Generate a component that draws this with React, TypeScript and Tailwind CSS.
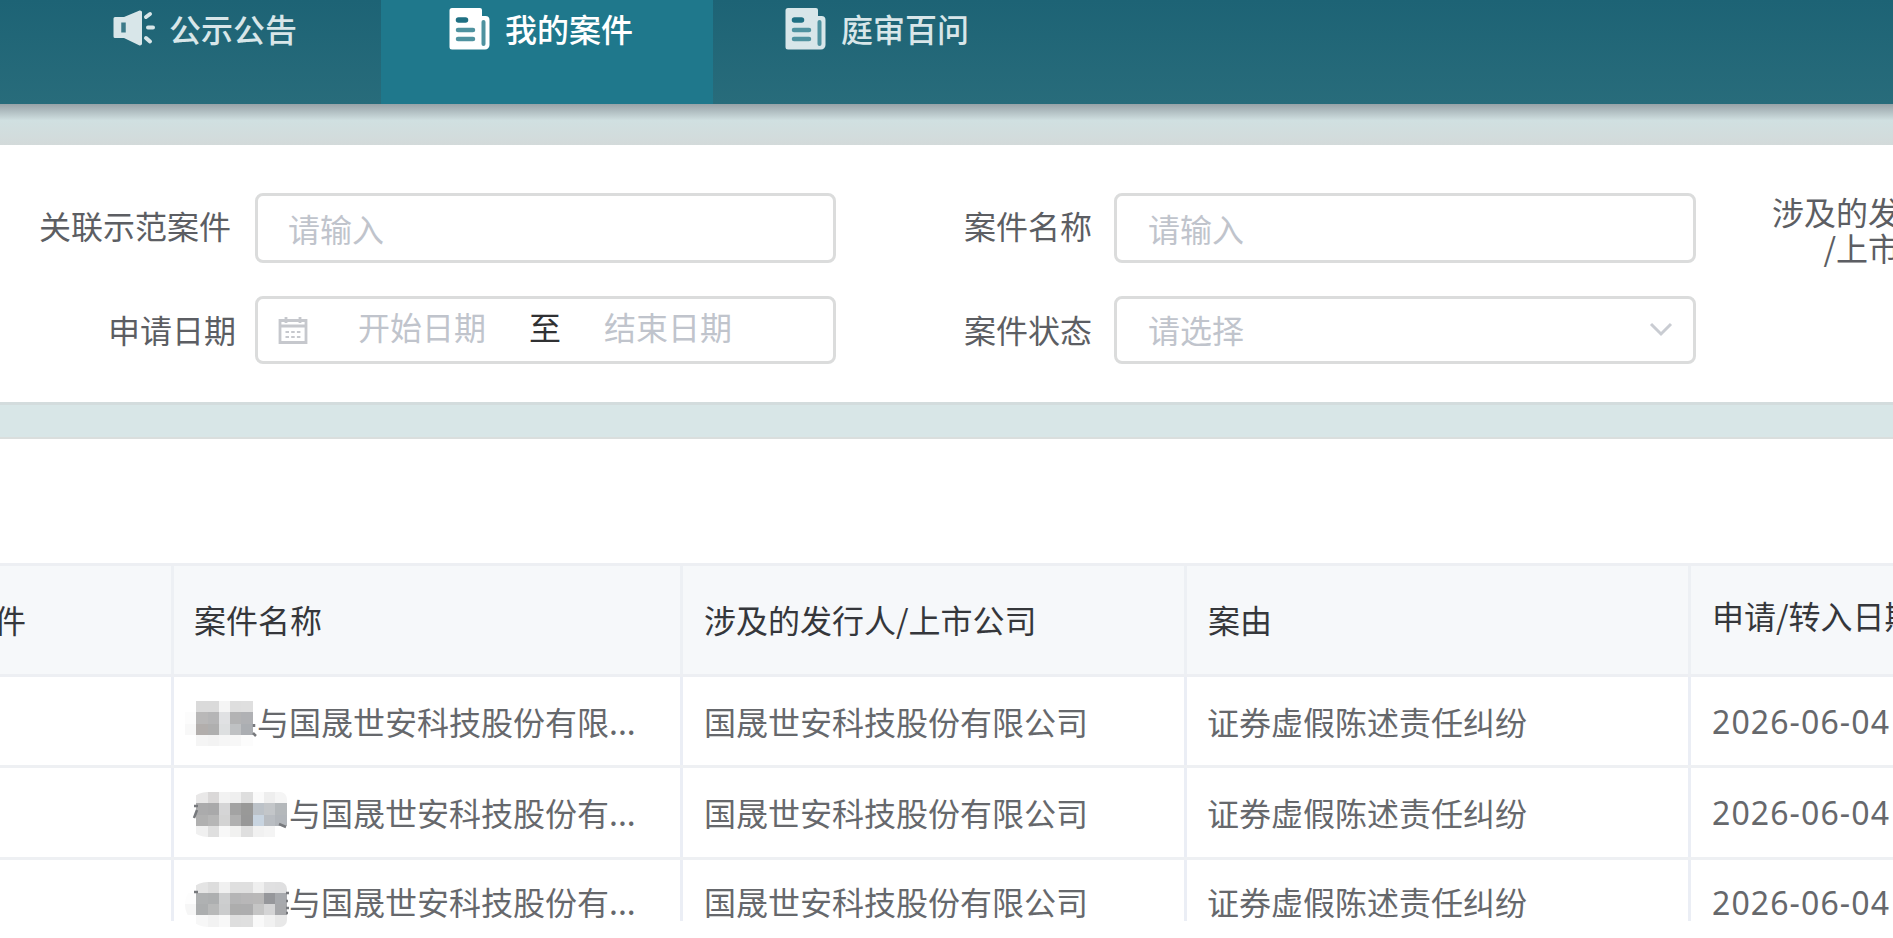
import type { ReactNode } from "react";

type CaseRow = {
  id: string;
  name: string;
  hiddenChars: 2 | 3;
  company: string;
  cause: string;
  date: string;
  mosaic: string[][];
  strokes: string;
  className: string;
};

type Tab = {
  label: string;
  icon: ReactNode;
  active: boolean;
  className: string;
};

// Pixelated blocks that cover the party's name, row by row
const mosaicOne = [
  ["transparent", "#dadada", "#dadada", "#f5f5f5", "#dedede", "#dfdfdf"],
  ["#fcfcfc", "#b9b8b8", "#b5b5b6", "#e0e1e3", "#b3b3b4", "#b0b1b4"],
  ["#f8f8f8", "#b2aeac", "#afafaf", "#dddfe0", "#bfc1c3", "#abaeb2"],
  ["transparent", "#f5f5f5", "#f3f3f3", "#f6f6f6", "#f7f7f7", "#fcfcfc"],
];

const mosaicTwo = [
  ["transparent", "#e9e8e8", "#dad8d8", "#f2f2f2", "#efefef", "#dedede", "#fafafa", "#eeeeee", "#f5f5f5"],
  ["transparent", "#ababac", "#a9a9aa", "#d5d5d6", "#a3a3a3", "#999998", "#bcc2c8", "#c3c6c9", "#b4b8bb"],
  ["transparent", "#b0b0b0", "#b6b6b6", "#d3d3d3", "#b0b0b0", "#989898", "#c8d4e0", "#b9bdc2", "#b2b6bb"],
  ["transparent", "#f0f0f0", "#dfdfdf", "#f8f8f8", "#f1f1f0", "#dfdfdf", "#f1f1f1", "#f4f4f4", "transparent"],
];

const mosaicThree = [
  ["transparent", "#e4e4e4", "#dddddd", "#f0f0f0", "#dfdfdf", "#dfdfdf", "#efefef", "#e0e0e1", "#dfdfe0"],
  ["#fdfdfd", "#afb1b2", "#adafb0", "#cdcecf", "#b5b5b6", "#b8b7b8", "#b9b8b8", "#96979b", "#a7a9ad"],
  ["#f6f6f6", "#acaeaf", "#b8b9b9", "#cbcccd", "#adadad", "#adadae", "#c5c5c5", "#d4d4d5", "#a7a8ab"],
  ["transparent", "#f7f7f7", "#f2f2f2", "#f8f8f8", "#dedede", "#dfdfdf", "#f9f9f9", "#f1f1f1", "#e8e8e8"],
];

const rows: CaseRow[] = [
  {
    id: "1",
    name: "与国晟世安科技股份有限...",
    hiddenChars: 2,
    company: "国晟世安科技股份有限公司",
    cause: "证券虚假陈述责任纠纷",
    date: "2026-06-04",
    mosaic: mosaicOne,
    strokes: "M69 23v3M68 32l3 3",
    className: "grid-rows-[88px] leading-[88px] border-b-3",
  },
  {
    id: "2",
    name: "与国晟世安科技股份有...",
    hiddenChars: 3,
    company: "国晟世安科技股份有限公司",
    cause: "证券虚假陈述责任纠纷",
    date: "2026-06-04",
    mosaic: mosaicTwo,
    strokes: "M9 14h4M12 18l-3 8M94 32l7 3",
    className: "grid-rows-[89px] leading-[88px] border-b-3",
  },
  // the table body ends in the middle of the last row
  {
    id: "3",
    name: "与国晟世安科技股份有...",
    hiddenChars: 3,
    company: "国晟世安科技股份有限公司",
    cause: "证券虚假陈述责任纠纷",
    date: "2026-06-04",
    mosaic: mosaicThree,
    strokes: "M9 10h4M101 11h3M101 19h2M101 26h3M101 31h2",
    className: "grid-rows-[61px] leading-[83px]",
  },
];

const NewsIcon = () => (
  <svg width="41" height="42" viewBox="0 0 41 42" className="shrink-0">
    <path
      fill="currentColor"
      d="M3 0h28a2 2 0 0 1 2 2v6h3.500a4 4 0 0 1 4 4v25a4.500 4.500 0 0 1-4.500 4.500H3a2.500 2.500 0 0 1-2.500-2.500V2.500A2.500 2.500 0 0 1 3 0z"
    />
    <g fill="none" strokeLinecap="round">
      <path d="M9.500 12h7" className="stroke-[#1f7083]" strokeWidth="5.500" />
      <path d="M9 22h15M9 31h15" className="stroke-[#4f929f]" strokeWidth="4.500" />
      <path d="M34.500 14v22" className="stroke-[#4f929f]" strokeWidth="4" />
    </g>
  </svg>
);

const HornIcon = () => (
  <svg width="42" height="36" viewBox="0 0 42 36" className="-mt-[3px] shrink-0">
    <path
      fill="currentColor"
      d="M2 7h9L26 .8c1.500-.6 3 .2 3 1.700v31c0 1.500-1.500 2.300-3 1.700L11 28H2a1.500 1.500 0 0 1-1.500-1.500v-18A1.500 1.500 0 0 1 2 7z"
    />
    <path d="M10.500 12.500v10" className="stroke-[#3c7a89]" strokeWidth="4.500" />
    <path
      d="M33 7l4-3M35 17.500h5M33 28l4 3.500"
      stroke="currentColor"
      strokeWidth="4"
      strokeLinecap="round"
    />
  </svg>
);

const CalendarIcon = () => (
  <svg width="30" height="29" viewBox="0 0 30 29" fill="none" stroke="#c6c8cd">
    <path d="M2 4.500h26v22H2zM2 10h26" strokeWidth="2.800" />
    <path d="M8 1v6M22 1v6" strokeWidth="2.800" />
    <path d="M7.500 16h15M7.500 21h15" strokeWidth="2" strokeDasharray="3.500 2.200" />
  </svg>
);

const tabs: Tab[] = [
  {
    label: "公示公告",
    icon: <HornIcon />,
    active: false,
    className: "w-[381px] pl-[113px] gap-[14px]",
  },
  {
    label: "我的案件",
    icon: <NewsIcon />,
    active: true,
    className: "w-[332px] pl-[68px] gap-[15px]",
  },
  {
    label: "庭审百问",
    icon: <NewsIcon />,
    active: false,
    className: "w-[332px] pl-[72px] gap-[15px]",
  },
];

const Header = () => (
  <header className="flex h-[104px] shrink-0 bg-linear-to-b from-[#1d6375] to-[#286c7b]">
    {tabs.map((tab) => (
      <div
        key={tab.label}
        className={`flex shrink-0 items-start ${tab.className} ${
          tab.active ? "bg-[#1f788c] text-white" : "text-[#d8e6e9]"
        }`}
      >
        <div className="flex h-[58px] items-center">{tab.icon}</div>
        <span className="h-[56px] text-[32px] leading-[56px] font-medium">{tab.label}</span>
      </div>
    ))}
  </header>
);

const Label = ({ children, className = "" }: { children: ReactNode; className?: string }) => (
  <div className={`shrink-0 text-right whitespace-nowrap text-[#5c5e63] ${className}`}>
    {children}
  </div>
);

const Field = ({ children, className = "" }: { children: ReactNode; className?: string }) => (
  <div
    className={`flex shrink-0 items-center rounded-[8px] border-3 border-[#dbdcdc] bg-white text-[#c0c4cc] ${className}`}
  >
    {children}
  </div>
);

const SearchForm = () => (
  <section className="h-[260px] shrink-0 border-b-3 border-[#d3dcdd] bg-white pt-12">
    <div className="flex h-[70px] items-start">
      <Label className="w-[231px] leading-[64px]">关联示范案件</Label>
      <Field className="ml-6 h-[70px] w-[581px] pl-[30px]">请输入</Field>
      <Label className="w-[256px] leading-[64px]">案件名称</Label>
      <Field className="ml-[22px] h-[70px] w-[582px] pl-[31px]">请输入</Field>
      <Label className="ml-[60px] w-[208px] leading-9">
        涉及的发行人
        <br />
        /上市公司
      </Label>
    </div>
    <div className="mt-[33px] flex h-[68px] items-start">
      <Label className="w-[236px] leading-[66px]">申请日期</Label>
      <Field className="ml-[19px] h-[68px] w-[581px] pl-5">
        <CalendarIcon />
        <span className="-mt-2 ml-[50px]">开始日期</span>
        <span className="-mt-2 ml-[43px] text-[#303133]">至</span>
        <span className="-mt-2 ml-[43px]">结束日期</span>
      </Field>
      <Label className="w-[256px] leading-[66px]">案件状态</Label>
      <Field className="ml-[22px] h-[68px] w-[582px] justify-between pr-[20px] pl-[31px]">
        <span className="-mt-[3px]">请选择</span>
        <svg width="24" height="16" viewBox="0 0 24 16" fill="none">
          <path d="M2 2l10 10L22 2" stroke="#c9ccd2" strokeWidth="3" />
        </svg>
      </Field>
    </div>
  </section>
);

const Mosaic = ({
  cells,
  strokes,
  wide,
}: {
  cells: string[][];
  strokes: string;
  wide: boolean;
}) => (
  <div className="absolute top-1/2 -left-[9px] -mt-5">
    <div
      className={`grid grid-rows-[repeat(4,11.300px)] ${
        wide
          ? "grid-cols-[repeat(9,11.300px)] rounded-l-[26px] rounded-r-lg"
          : "grid-cols-[repeat(6,11.300px)]"
      } overflow-hidden`}
    >
      {cells.flat().map((color, idx) => (
        <span key={idx} style={{ backgroundColor: color }}></span>
      ))}
    </div>
    <svg width="106" height="46" viewBox="0 0 106 46" className="absolute top-0 left-0">
      <path d={strokes} fill="none" stroke="#77797d" strokeWidth="2.500" />
    </svg>
  </div>
);

const columns = "grid grid-cols-[174px_509px_504px_504px_400px]";
const headCell = "border-r-3 border-[#edf0f4]";
const bodyCell = "border-r-3 border-[#ebeef5]";

const CaseTable = () => (
  <section className="h-[501px] shrink-0 border-t-2 border-[#dadedd] bg-white pt-[124px]">
    <div
      className={`${columns} h-[114px] border-y-3 border-[#edeff3] bg-[#f6f8fa] leading-[107px] text-[#35373b]`}
    >
      <div className={`${headCell} flex justify-end pr-[145px] whitespace-nowrap`}>
        关联示范案件
      </div>
      <div className={`${headCell} pl-5`}>案件名称</div>
      <div className={`${headCell} pl-[21px]`}>涉及的发行人/上市公司</div>
      <div className={`${headCell} pl-[21px]`}>案由</div>
      <div className="pl-[21px] leading-[98px] whitespace-nowrap">申请/转入日期</div>
    </div>
    {rows.map((row) => (
      <div
        key={row.id}
        className={`${columns} border-[#eef0f3] text-[#66686c] ${row.className}`}
      >
        <div className={bodyCell}></div>
        <div className={`${bodyCell} pl-5`}>
          <div className="relative whitespace-nowrap">
            <span className={row.hiddenChars === 2 ? "pl-[63px]" : "pl-[95px]"}>{row.name}</span>
            <Mosaic cells={row.mosaic} strokes={row.strokes} wide={row.hiddenChars === 3} />
          </div>
        </div>
        <div className={`${bodyCell} pl-[21px]`}>{row.company}</div>
        <div className={`${bodyCell} pl-[20px]`}>{row.cause}</div>
        <div className="pt-px pl-[21px] font-['Noto_Sans',sans-serif] tracking-[1.100px]">
          {row.date}
        </div>
      </div>
    ))}
  </section>
);

const App = () => {
  return (
    <div className="flex h-[938px] w-[1893px] flex-col overflow-hidden bg-[#d8e6e7] font-['Noto_Sans_CJK_SC',sans-serif] text-[32px]">
      <Header />
      <div className="h-[41px] shrink-0 bg-linear-to-b from-[#98a3a8] via-[#d0e0e1] via-40% to-[#d3dada]"></div>
      <SearchForm />
      <div className="h-8 shrink-0"></div>
      <CaseTable />
    </div>
  );
};

export default App;
